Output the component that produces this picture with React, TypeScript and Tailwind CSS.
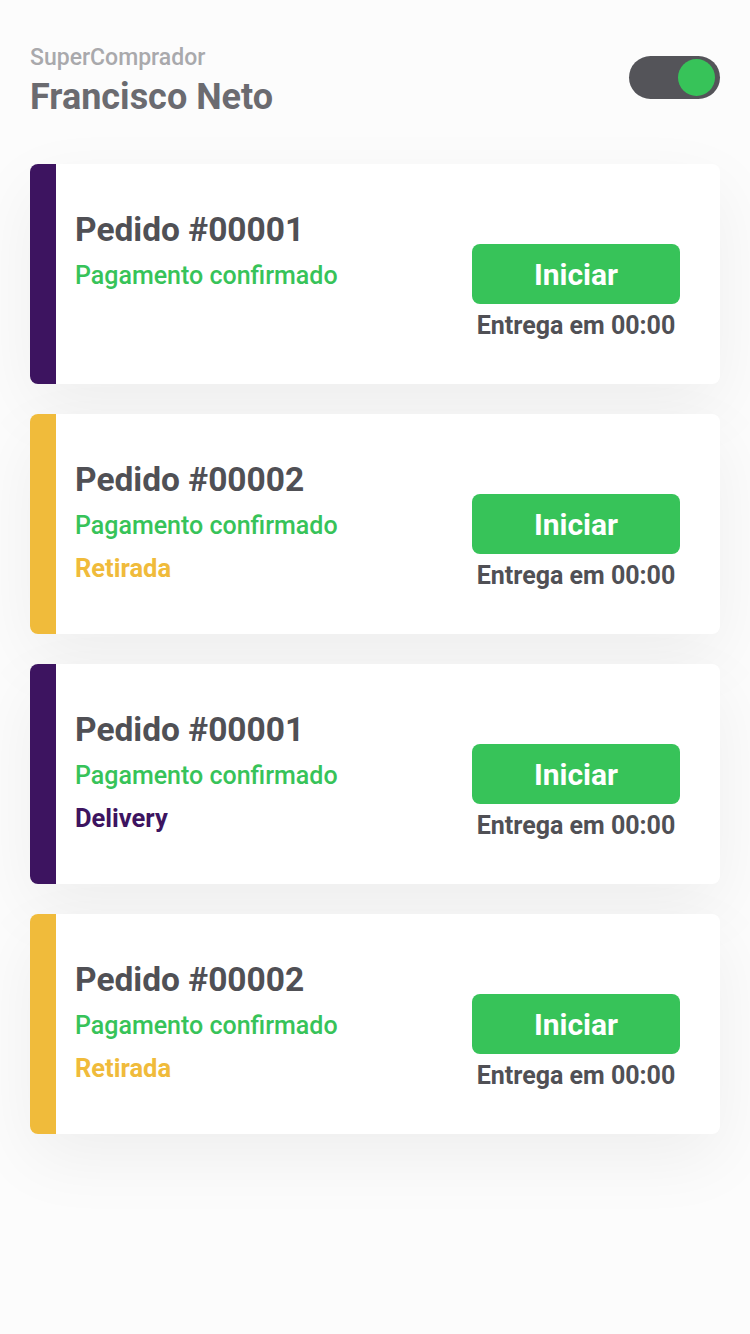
import React from 'react';

interface Order {
  id: string;
  accent: string;
  kind?: 'Delivery' | 'Retirada';
}

const orders: Order[] = [
  { id: '00001', accent: 'bg-[#3d1460]' },
  { id: '00002', accent: 'bg-[#f0bb3b]', kind: 'Retirada' },
  { id: '00001', accent: 'bg-[#3d1460]', kind: 'Delivery' },
  { id: '00002', accent: 'bg-[#f0bb3b]', kind: 'Retirada' },
];

const OrderCard: React.FC<{ order: Order }> = ({ order }) => (
  <div className="flex h-[220px] rounded-lg overflow-hidden bg-white shadow-[0_24px_70px_rgba(0,0,0,0.06)]">
    <div className={`w-[26px] shrink-0 ${order.accent}`}></div>
    <div className="flex flex-1 justify-between pl-[19px] pr-[40px]">
      {/* Order info */}
      <div className="pt-[47px]">
        <h2 className="text-[33.5px] leading-[38px] font-bold text-[#505055]">Pedido #{order.id}</h2>
        <p className="mt-[6px] text-[25px] leading-[42px] font-medium text-[#37c359]">
          Pagamento confirmado
        </p>
        {order.kind === 'Delivery' && (
          <p className="text-[25.5px] leading-[43px] font-bold text-[#3d1460]">Delivery</p>
        )}
        {order.kind === 'Retirada' && (
          <p className="text-[25.5px] leading-[43px] font-bold text-[#f0bb3b]">Retirada</p>
        )}
      </div>

      {/* Action */}
      <div className="w-[208px] pt-[80px] flex flex-col items-center">
        <button className="w-full h-[60px] rounded-lg bg-[#37c359] text-white text-[30px] font-bold">
          Iniciar
        </button>
        <span className="mt-[7px] text-[25px] leading-[30px] font-bold text-[#505055]">Entrega em 00:00</span>
      </div>
    </div>
  </div>
);

const App: React.FC = () => {
  return (
    <div className="min-h-[1334px] bg-[#fcfcfc] px-[30px] pt-[44px] font-['Roboto',sans-serif]">
      <div className="flex items-start justify-between">
        <div>
          <p className="text-[23px] leading-[28px] font-medium text-[#a9a9ac]">SuperComprador</p>
          <h1 className="mt-[3px] text-[36px] leading-[44px] font-bold text-[#6b6b70]">Francisco Neto</h1>
        </div>
        <div className="mt-[12px] w-[91px] h-[43px] rounded-full bg-[#545459] flex items-center justify-end pr-[5px]">
          <div className="w-[37px] h-[37px] rounded-full bg-[#37c359]"></div>
        </div>
      </div>

      <div className="mt-[45px] flex flex-col gap-[30px]">
        {orders.map((order, index) => (
          <OrderCard key={index} order={order} />
        ))}
      </div>
    </div>
  );
};

export default App;
